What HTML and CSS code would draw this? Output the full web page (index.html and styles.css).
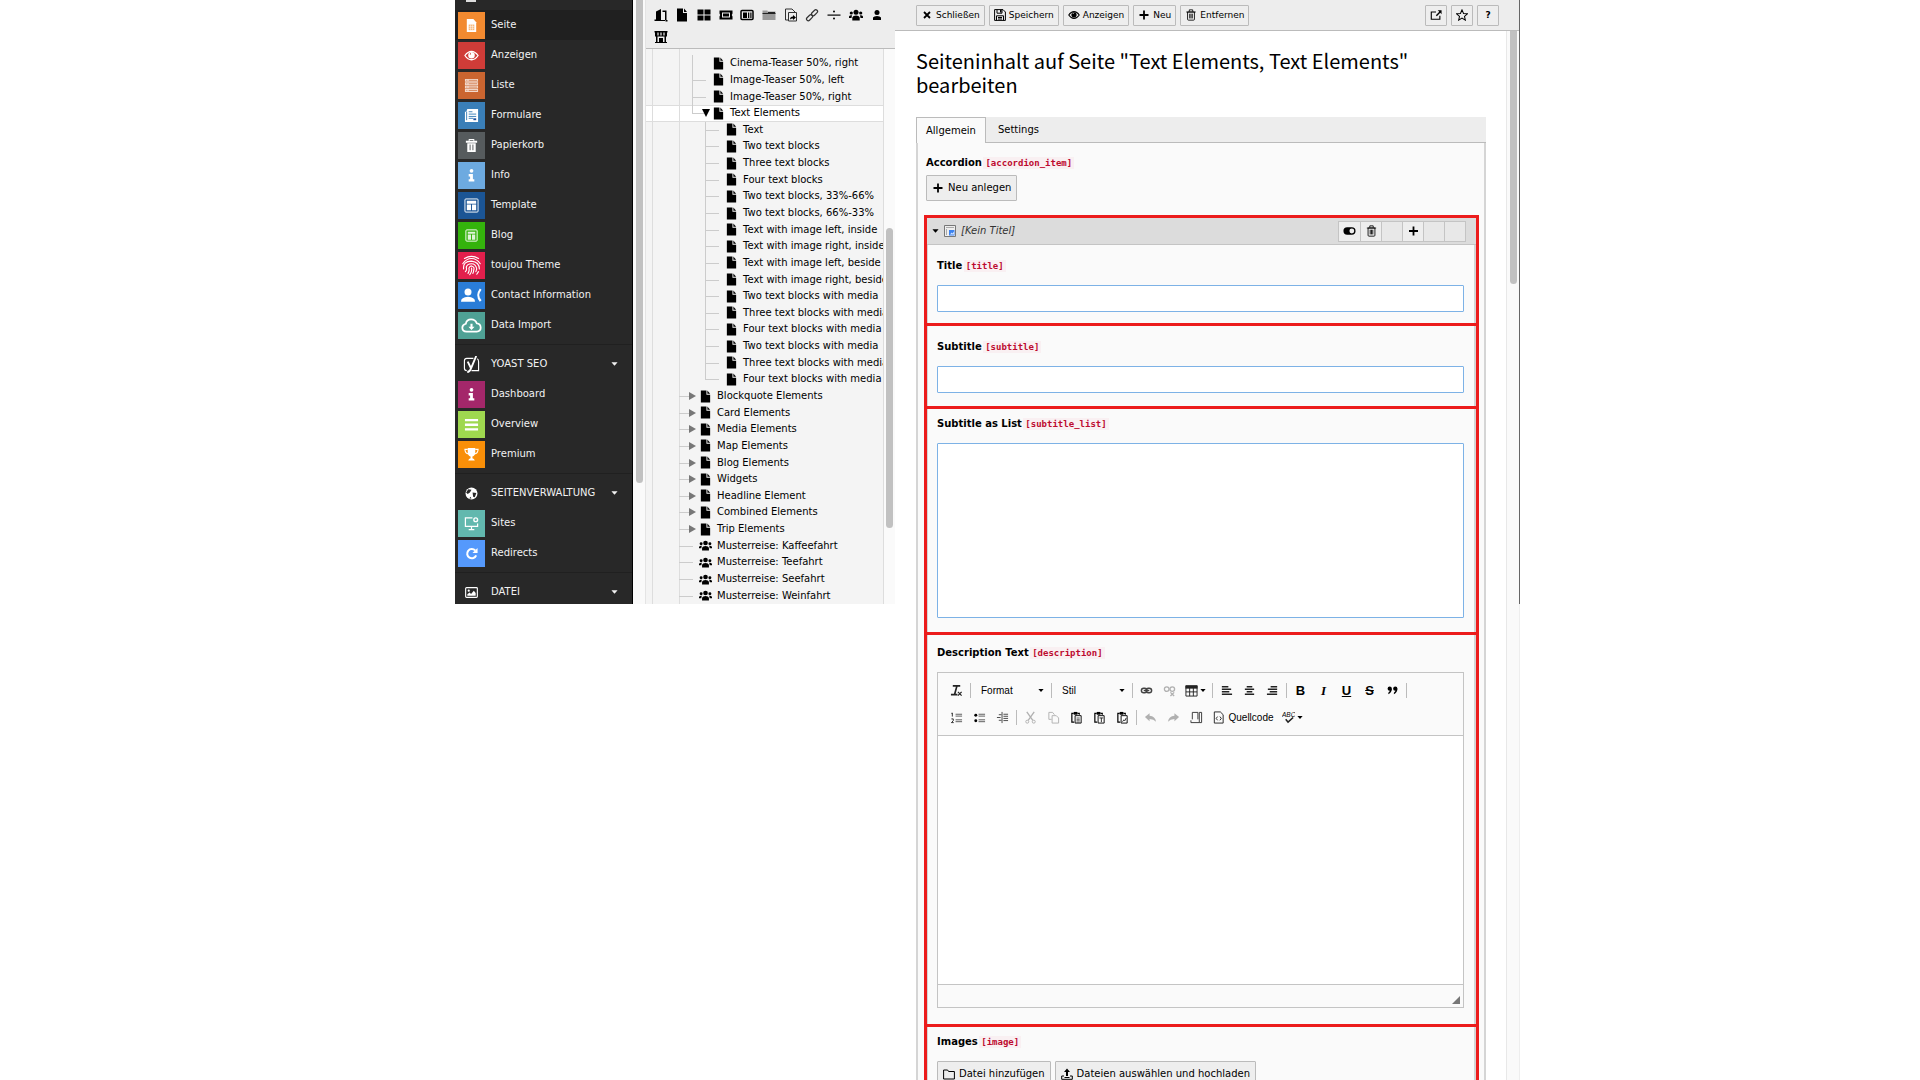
FILE: index.html
```html
<!DOCTYPE html>
<html lang="de">
<head>
<meta charset="utf-8">
<title>Seiteninhalt bearbeiten</title>
<link rel="stylesheet" href="styles.css">
</head>
<body>
<svg class="sprite" aria-hidden="true">
  <symbol id="page" viewBox="0 0 12 14"><path d="M1 .5h6v4.500h4V13.500H1z"/><path d="M8 .5l3 3.500H8z"/></symbol>
  <symbol id="users" viewBox="0 0 14 12"><circle cx="7" cy="3.300" r="2.500"/><circle cx="2.300" cy="4" r="1.600"/><circle cx="11.700" cy="4" r="1.600"/><path d="M3.300 11.500V8.500Q4 6.500 7 6.500t3.700 2v3zM0 9V7.500q.5-1.300 3-1.200L2.500 9zM14 9V7.500q-.5-1.300-3-1.200l.5 2.700z"/></symbol>
  <symbol id="plus" viewBox="0 0 12 12"><path d="M6 1.500v9M1.500 6h9" fill="none" stroke="currentColor" stroke-width="1.800"/></symbol>
  <symbol id="trash" viewBox="0 0 12 14"><path d="M2 3.500h8V12q0 1-1 1H3q-1 0-1-1zM.5 3.500h11M4 3V1h4v2M4.500 5.500v5.500M6 5.500v5.500M7.500 5.500v5.500" fill="none" stroke="currentColor"/></symbol>
  <symbol id="eye" viewBox="0 0 16 12"><path d="M1 6q3-4.500 7-4.500T15 6q-3 4.500-7 4.500T1 6z" fill="none" stroke="currentColor" stroke-width="1.400"/><path d="M8 2.200a3.500 3.500 0 1 0 3.500 3.500A3.500 3.500 0 0 0 8 2.200zM7.500 3.300v1.500H6q0-1.300 1.500-1.500z" fill-rule="evenodd"/></symbol>
  <symbol id="info" viewBox="0 0 12 16"><circle cx="6" cy="3" r="2"/><path d="M3 6.500h4.500v5.500H9v2.500H3V12h1.500V9H3z"/></symbol>
  <symbol id="caret" viewBox="0 0 8 4"><path d="M.5 0h7L4 4z"/></symbol>
  <symbol id="clip" viewBox="0 0 14 14"><path d="M4.500 12H2V2.500h2M8 2.500h2V4" fill="none" stroke="currentColor" stroke-width="1.300"/><path d="M4 1h4v3H4z"/><path d="M5.500 5h6.500v8H5.500z" fill="#fff" stroke="currentColor"/></symbol>
</svg>
<div class="page">
  <nav class="modules" aria-label="Module">
    <div class="cut-off"><span></span></div>
    <ul>
      <li class="active"><a href="#"><i class="tile orange"><svg viewBox="0 0 16 16"><path d="M3 1h7l3 3.500V15H3z"/><path d="M5 7h6v6H5z" fill="#f7b678"/><path d="M5 9h6M5 11h6M7 7v6M9 7v6" stroke="#fff" stroke-width=".5"/></svg></i>Seite</a></li>
      <li><a href="#"><i class="tile red"><svg viewBox="0 0 16 12"><use href="#eye"/></svg></i>Anzeigen</a></li>
      <li><a href="#"><i class="tile rust"><svg viewBox="0 0 16 16"><path d="M1 1h14v3H1zM1 4.600h14v3H1zM1 8.200h14v3H1zM1 11.800h14v3H1z" opacity=".75"/><path d="M2.500 2.500h1M2.500 6.100h1M2.500 9.700h1M2.500 13.300h1M5 2.500h9M5 6.100h9M5 9.700h9M5 13.300h9" stroke="#ca6530" stroke-width=".7"/></svg></i>Liste</a></li>
      <li><a href="#"><i class="tile blue"><svg viewBox="0 0 16 16"><path d="M3.500 1H15v14H1V4h1.500"/><path d="M5 4h4M5 6.500h8M5 9h8M5 11h5M2.800 4v9" stroke="#3a7fb8"/><path d="M10 11h3v2h-3z" fill="#1c4f9c"/></svg></i>Formulare</a></li>
      <li><a href="#"><i class="tile grey"><svg viewBox="0 0 16 16"><path d="M2 3h3V1h6v2h3v2H2zM3.500 5.500h9V15h-9zM6 3h4V2H6z" fill-rule="evenodd"/><path d="M6.500 7v6M9.500 7v6" stroke="#565b5d"/></svg></i>Papierkorb</a></li>
      <li><a href="#"><i class="tile sky"><svg viewBox="0 0 12 16"><use href="#info"/></svg></i>Info</a></li>
      <li><a href="#"><i class="tile navy"><svg viewBox="0 0 16 16"><rect x="1" y="1" width="14" height="14" rx="1" fill="none" stroke="#fff"/><path d="M3 3h10v3H3zM3 7h4.500v6H3zM8.500 7H13v6H8.500z"/></svg></i>Template</a></li>
      <li><a href="#"><i class="tile green"><svg viewBox="0 0 16 16"><rect x="2" y="2" width="12" height="12" rx="1" fill="none" stroke="#fff"/><path d="M4 4h8v2H4zM4 7h3.500v5.500H4zM8.500 7H12v5.500H8.500z" opacity=".85"/></svg></i>Blog</a></li>
      <li><a href="#"><i class="tile crimson"><svg class="big" viewBox="0 0 24 24"><path d="M4 4q8-5 16 0M2 10q4-6 10-6t10 6M3 16q-1-9 9-9 9 1 9 9M5 19q2-2 1-5 1-4 6-4t6 6l-1 3M8 21q2-3 1-6 1-2.500 3-2.500 4 1 2.500 5 0 2-1 3.500M12 15q1 4-2 7.500M20 19l-2 3" fill="none" stroke="#fff" stroke-width="1.300" stroke-linecap="round"/></svg></i>toujou Theme</a></li>
      <li><a href="#"><i class="tile azure"><svg class="big" viewBox="0 0 24 18"><circle cx="8" cy="5" r="4"/><path d="M0 16q0-5 8-5.500 8 .5 8 5.500z"/><path d="M23.500 2.500l-2 3q-1.500 3 0 6l2 3-2 1.500q-6-7 0-15z"/></svg></i>Contact Information</a></li>
      <li><a href="#"><i class="tile teal"><svg class="big" viewBox="0 0 24 18"><path d="M6.500 16q-5-.3-5-4.500 0-3.500 4-4.500 1-5 6-5 5 0 6.500 4.500 4.500.5 4.500 5 0 4-4.500 4.500z" fill="none" stroke="#fff" stroke-width="2"/><path d="M10.800 7h2.400v3.500h2.300L12 14l-3.500-3.500h2.300z"/></svg></i>Data Import</a></li>
    </ul>
    <ul>
      <li class="group"><button type="button"><i class="tile"><svg class="yoast" viewBox="0 0 18 18"><path d="M11 2.500H4Q1.500 2.500 1.500 5v8q0 2.500 2.500 2.500M9 15.500h7.500V6q0-2.500-1.500-3" fill="none" stroke="#fff" stroke-width="1.200"/><path d="M5 6l3.500 7M14 0L8.500 13q-1.200 4-4 4" fill="none" stroke="#fff" stroke-width="2"/></svg></i>YOAST SEO<svg class="caret"><use href="#caret"/></svg></button></li>
      <li><a href="#"><i class="tile plum"><svg viewBox="0 0 12 16"><use href="#info"/></svg></i>Dashboard</a></li>
      <li><a href="#"><i class="tile lime"><svg viewBox="0 0 16 16"><path d="M1 2h14v2.500H1zM1 7h14v2.500H1zM1 12h14v2.500H1z"/></svg></i>Overview</a></li>
      <li><a href="#"><i class="tile amber"><svg viewBox="0 0 16 16"><path d="M4 1h8v5q0 3-3 4v2q2 .3 2.500 2.500h-7Q5 12.300 7 12v-2Q4 9 4 6z"/><path d="M4 2.500H1Q1 7 5 7.500M12 2.500h3Q15 7 11 7.500" fill="none" stroke="#fff" stroke-width="1.200"/></svg></i>Premium</a></li>
    </ul>
    <ul>
      <li class="group"><button type="button"><i class="tile"><svg class="small" viewBox="0 0 12 12"><circle cx="6" cy="6" r="5.500"/><path d="M3 2l3 .5L4.500 5l-2 1.500L1 5zM7 5l3.500.5L9 9.500 7.500 9zM5 9l1 1.500H4z" fill="#282828"/></svg></i>SEITENVERWALTUNG<svg class="caret"><use href="#caret"/></svg></button></li>
      <li><a href="#"><i class="tile mint"><svg viewBox="0 0 16 16"><path d="M9 2H1.500v9h13V8M8 11v3M5 14.500h6" fill="none" stroke="#fff" stroke-width="1.300"/><circle cx="12.500" cy="4" r="2" fill="none" stroke="#fff" stroke-width="1.500"/></svg></i>Sites</a></li>
      <li><a href="#"><i class="tile cornflower"><svg class="small" viewBox="0 0 14 14"><path d="M11 3.800A5 5 0 1 0 12 9" fill="none" stroke="#fff" stroke-width="2.200"/><path d="M13.500 1v5.500H8z"/></svg></i>Redirects</a></li>
    </ul>
    <ul>
      <li class="group"><button type="button"><i class="tile"><svg class="small" viewBox="0 0 14 12"><rect x=".7" y=".7" width="12.600" height="10.600" rx="1" fill="none" stroke="#fff" stroke-width="1.200"/><circle cx="4" cy="4" r="1.200"/><path d="M2.500 9.500V8L5 6l1.500 1.500L9.500 4l2 2.500v3z"/></svg></i>DATEI<svg class="caret"><use href="#caret"/></svg></button></li>
    </ul>
  </nav>
  <div class="track track-modules"><span class="thumb"></span></div>

  <aside class="pagetree">
    <div class="tree-tools">
      <button type="button" aria-label="Backend"><svg viewBox="0 0 14 14"><path d="M.5 13v-1.500H2V3.500l5-2.500v11h4.500v1.500h2V12h-1V2.500H8.500V4H11v9H.5z"/></svg></button>
      <button type="button" aria-label="Standard"><svg viewBox="0 0 12 14"><use href="#page"/></svg></button>
      <button type="button" aria-label="Raster"><svg viewBox="0 0 14 14"><path d="M.5 1.500h6v5h-6zM7.500 1.500h6v5h-6zM.5 7.500h6v5h-6zM7.500 7.500h6v5h-6z"/></svg></button>
      <button type="button" aria-label="Ticket"><svg viewBox="0 0 14 14"><path d="M.5 2.500h13v3q-1.500 1.500 0 3v3H.5v-3q1.500-1.500 0-3zM3 4.500v5h8v-5z" fill-rule="evenodd"/><path d="M4 5.500h6v3H4z"/></svg></button>
      <button type="button" aria-label="News"><svg viewBox="0 0 14 14"><rect x="1" y="2.500" width="12" height="9" rx="1" fill="none" stroke="#000" stroke-width="1.500"/><path d="M3 4.500h4V10H3zM8 4.500h1.300V10H8zM10.300 4.500h1.200V10h-1.200z"/></svg></button>
      <button type="button" aria-label="Ordner"><svg viewBox="0 0 14 14"><path d="M.5 2.500h5v1h8v8.500H.5z" fill="#999"/><path d="M.5 5.500h13M6 4.500h7" stroke="#222"/></svg></button>
      <button type="button" aria-label="Verweis"><svg viewBox="0 0 14 14"><path d="M5 12H1.500V1H8l3 3v1M4.500 4.500h8V13h-8z" fill="none" stroke="#333"/><path d="M6 11.500q0-3 3-3V7l3 2.500-3 2.500v-1.500q-2 0-3 1z"/></svg></button>
      <button type="button" aria-label="Link"><svg viewBox="0 0 14 14"><g fill="none" stroke="#333" stroke-width="1.200"><rect x="1" y="8" width="7" height="3.500" rx="1.700" transform="rotate(-45 4.500 9.700)"/><rect x="6" y="3" width="7" height="3.500" rx="1.700" transform="rotate(-45 9.500 4.700)"/></g></svg></button>
      <button type="button" aria-label="Trenner"><svg viewBox="0 0 14 14"><path d="M.5 6.500h13v1.200H.5z"/><circle cx="7" cy="3.500" r="1"/><circle cx="7" cy="10.500" r="1"/></svg></button>
      <button type="button" aria-label="Gruppe"><svg viewBox="0 0 14 12"><use href="#users"/></svg></button>
      <button type="button" aria-label="Person"><svg viewBox="0 0 14 14"><circle cx="7" cy="4.500" r="2.500"/><path d="M3 12V9.500Q4 8 7 8t4 1.500V12z"/></svg></button>
      <button type="button" aria-label="Shop"><svg viewBox="0 0 14 14"><path d="M.5 1h13v1.500H.5zM1 2.500h12v4H1zM2 6.500h1.500V12H5V8h4v4h1.500V6.500H12V12h1v1H1v-1h1z"/><path d="M4 2.500v3M7 2.500v3M10 2.500v3" stroke="#ededed" stroke-width="1.200"/></svg></button>
    </div>
    <div class="tree-body">
      <ul class="tree">
        <li class="l2 first"><svg class="ic"><use href="#page"/></svg>Cinema-Teaser 50%, right</li>
        <li class="l2"><svg class="ic"><use href="#page"/></svg>Image-Teaser 50%, left</li>
        <li class="l2"><svg class="ic"><use href="#page"/></svg>Image-Teaser 50%, right</li>
        <li class="l2 last selected"><span class="open"></span><svg class="ic"><use href="#page"/></svg>Text Elements</li>
        <li class="l3"><svg class="ic"><use href="#page"/></svg>Text</li>
        <li class="l3"><svg class="ic"><use href="#page"/></svg>Two text blocks</li>
        <li class="l3"><svg class="ic"><use href="#page"/></svg>Three text blocks</li>
        <li class="l3"><svg class="ic"><use href="#page"/></svg>Four text blocks</li>
        <li class="l3"><svg class="ic"><use href="#page"/></svg>Two text blocks, 33%-66%</li>
        <li class="l3"><svg class="ic"><use href="#page"/></svg>Two text blocks, 66%-33%</li>
        <li class="l3"><svg class="ic"><use href="#page"/></svg>Text with image left, inside</li>
        <li class="l3"><svg class="ic"><use href="#page"/></svg>Text with image right, inside</li>
        <li class="l3"><svg class="ic"><use href="#page"/></svg>Text with image left, beside</li>
        <li class="l3"><svg class="ic"><use href="#page"/></svg>Text with image right, beside</li>
        <li class="l3"><svg class="ic"><use href="#page"/></svg>Two text blocks with media</li>
        <li class="l3"><svg class="ic"><use href="#page"/></svg>Three text blocks with media</li>
        <li class="l3"><svg class="ic"><use href="#page"/></svg>Four text blocks with media</li>
        <li class="l3"><svg class="ic"><use href="#page"/></svg>Two text blocks with media</li>
        <li class="l3"><svg class="ic"><use href="#page"/></svg>Three text blocks with media</li>
        <li class="l3 last"><svg class="ic"><use href="#page"/></svg>Four text blocks with media</li>
        <li class="l1"><span class="closed"></span><svg class="ic"><use href="#page"/></svg>Blockquote Elements</li>
        <li class="l1"><span class="closed"></span><svg class="ic"><use href="#page"/></svg>Card Elements</li>
        <li class="l1"><span class="closed"></span><svg class="ic"><use href="#page"/></svg>Media Elements</li>
        <li class="l1"><span class="closed"></span><svg class="ic"><use href="#page"/></svg>Map Elements</li>
        <li class="l1"><span class="closed"></span><svg class="ic"><use href="#page"/></svg>Blog Elements</li>
        <li class="l1"><span class="closed"></span><svg class="ic"><use href="#page"/></svg>Widgets</li>
        <li class="l1"><span class="closed"></span><svg class="ic"><use href="#page"/></svg>Headline Element</li>
        <li class="l1"><span class="closed"></span><svg class="ic"><use href="#page"/></svg>Combined Elements</li>
        <li class="l1"><span class="closed"></span><svg class="ic"><use href="#page"/></svg>Trip Elements</li>
        <li class="l1"><svg class="ic"><use href="#users"/></svg>Musterreise: Kaffeefahrt</li>
        <li class="l1"><svg class="ic"><use href="#users"/></svg>Musterreise: Teefahrt</li>
        <li class="l1"><svg class="ic"><use href="#users"/></svg>Musterreise: Seefahrt</li>
        <li class="l1"><svg class="ic"><use href="#users"/></svg>Musterreise: Weinfahrt</li>
      </ul>
      <div class="track track-tree"><span class="thumb"></span></div>
    </div>
  </aside>

  <main class="content">
    <header class="docheader">
      <button class="btn" type="button"><svg viewBox="0 0 12 12"><path d="M3 3l6 6M9 3L3 9" stroke="#000" stroke-width="1.800"/></svg>Schließen</button>
      <button class="btn" type="button"><svg viewBox="0 0 12 12"><path d="M.6.6h8.400l2.400 2.400v8.400H.6zM3 .6v3.600h5V.6M2.500 11.400V6.800h7v4.600M4 8.500h4M4 10h4" fill="none" stroke="#000"/><path d="M6 1h1.500v2.500H6z"/></svg>Speichern</button>
      <button class="btn" type="button"><svg viewBox="0 0 16 12"><use href="#eye"/></svg>Anzeigen</button>
      <button class="btn" type="button"><svg viewBox="0 0 12 12"><use href="#plus"/></svg>Neu</button>
      <button class="btn" type="button"><svg viewBox="0 0 12 14"><use href="#trash"/></svg>Entfernen</button>
      <span class="spacer"></span>
      <button class="btn square" type="button" aria-label="In neuem Fenster öffnen"><svg viewBox="0 0 14 12"><path d="M7 2.500H1.500v8.500h10V7" fill="none" stroke="#000" stroke-width="1.300"/><path d="M9 .5h4.500V5L12 3.500 8 7.500 6.800 6.300l4-4z"/></svg></button>
      <button class="btn square" type="button" aria-label="Lesezeichen"><svg viewBox="0 0 14 14"><path d="M7 1l1.800 4.200 4.500.4-3.400 3 1 4.400L7 10.700 3.100 13l1-4.400-3.400-3 4.500-.4z" fill="none" stroke="#000" stroke-width="1.200"/></svg></button>
      <button class="btn square help" type="button">?</button>
    </header>
    <div class="scroller">
      <form class="editform">
        <h1>Seiteninhalt auf Seite "Text Elements, Text Elements" bearbeiten</h1>
        <div class="tabs"><button class="tab current" type="button">Allgemein</button><button class="tab" type="button">Settings</button></div>
        <div class="panel">
          <div class="label accordion-label">Accordion <code>[accordion_item]</code></div>
          <button class="btn large" type="button"><svg viewBox="0 0 12 12"><use href="#plus"/></svg>Neu anlegen</button>
          <div class="record">
            <div class="record-head">
              <svg class="caret"><use href="#caret"/></svg>
              <svg class="record-icon" viewBox="0 0 12 12"><path d="M.5.5h11v11H.5z" fill="#eee" stroke="#777"/><path d="M2 2.500h8M2.500 4v6" stroke="#aaa"/><path d="M5 5h5.500v5.500H5z" fill="#3b82f0"/><path d="M6 9.500l1.500-2 1 1 1.500-2v3z" fill="#cfe2ff"/></svg>
              <em>[Kein Titel]</em>
              <span class="spacer"></span>
              <div class="actions">
                <button type="button" aria-label="Deaktivieren"><svg viewBox="0 0 14 10"><rect x=".5" y="1" width="13" height="8" rx="4"/><circle cx="9.500" cy="5" r="2.600" fill="#eee"/></svg></button>
                <button type="button" aria-label="Löschen"><svg viewBox="0 0 12 14"><use href="#trash"/></svg></button>
                <span></span>
                <button type="button" aria-label="Neu"><svg viewBox="0 0 12 12"><use href="#plus"/></svg></button>
                <span></span>
                <span></span>
              </div>
            </div>
            <section class="field f-title"><label class="label" for="title">Title <code>[title]</code></label><input id="title" type="text"></section>
            <section class="field f-subtitle"><label class="label" for="subtitle">Subtitle <code>[subtitle]</code></label><input id="subtitle" type="text"></section>
            <section class="field f-list"><label class="label" for="list">Subtitle as List <code>[subtitle_list]</code></label><textarea id="list"></textarea></section>
            <section class="field f-text"><label class="label" for="description">Description Text <code>[description]</code></label>
              <div class="editor">
                <div class="toolbar">
                  <div class="tools">
                    <button type="button" aria-label="Formatierung entfernen"><svg viewBox="0 0 14 14"><path d="M3 2h8M7.500 2L5 11M1 11.500h7" fill="none" stroke="#222" stroke-width="1.800"/><path d="M8.500 8.500l4 4M12.500 8.500l-4 4" stroke="#222" stroke-width="1.300"/></svg></button>
                    <hr>
                    <div class="combo"><select aria-label="Format"><option>Format</option></select><svg class="caret"><use href="#caret"/></svg></div>
                    <hr>
                    <div class="combo"><select aria-label="Stil"><option>Stil</option></select><svg class="caret"><use href="#caret"/></svg></div>
                    <hr>
                    <button type="button" aria-label="Link"><svg viewBox="0 0 14 14"><g fill="none" stroke="#444" stroke-width="1.600"><rect x="1.500" y="4.500" width="6" height="5" rx="2.500"/><rect x="6.500" y="4.500" width="6" height="5" rx="2.500"/><path d="M4 7h6"/></g></svg></button>
                    <button class="off" type="button" aria-label="Link entfernen"><svg viewBox="0 0 14 14"><g fill="none" stroke="#444" stroke-width="1.400"><rect x="1.500" y="3" width="5" height="5" rx="2.500"/><rect x="7.500" y="3" width="5" height="5" rx="2.500"/><path d="M8 9l4 4M12 9l-4 4"/></g></svg></button>
                    <button class="menu" type="button" aria-label="Tabelle"><svg viewBox="0 0 14 14"><path d="M1 2h12v11H1zM1 8.500h12M5 4v9M9 4v9" fill="none" stroke="#222"/><path d="M.5 1.500h13v3.500H.5z" fill="#222"/></svg><svg class="caret"><use href="#caret"/></svg></button>
                    <hr>
                    <button type="button" aria-label="Linksbündig"><svg viewBox="0 0 14 14"><path d="M2 3h7M2 5.700h10M2 8.400h8M2 11h11" stroke="#222" stroke-width="1.700"/></svg></button>
                    <button type="button" aria-label="Zentriert"><svg viewBox="0 0 14 14"><path d="M4 3h6M2 5.700h10M4 8.400h6M2 11h10" stroke="#222" stroke-width="1.700"/></svg></button>
                    <button type="button" aria-label="Rechtsbündig"><svg viewBox="0 0 14 14"><path d="M5 3h7M2 5.700h10M4 8.400h8M1 11h11" stroke="#222" stroke-width="1.700"/></svg></button>
                    <hr>
                    <button class="glyph" type="button"><b>B</b></button>
                    <button class="glyph serif" type="button"><i>I</i></button>
                    <button class="glyph" type="button"><u>U</u></button>
                    <button class="glyph" type="button"><s>S</s></button>
                    <button type="button" aria-label="Zitat"><svg viewBox="0 0 14 14"><circle cx="4" cy="5" r="2.300"/><circle cx="10" cy="5" r="2.300"/><path d="M6.300 5q0 4-3.800 6V9.500Q4.500 8 4.300 6zM12.300 5q0 4-3.800 6V9.500q2-1.500 1.800-3.500z"/></svg></button>
                    <hr>
                  </div>
                  <div class="tools">
                    <button type="button" aria-label="Nummerierte Liste"><svg viewBox="0 0 14 14"><path d="M2.500 2v4M1.500 2.500h1M1.500 8.500h2v2l-2 2h2.500" fill="none" stroke="#222"/><path d="M6 3.500h7M6 5.500h7M6 9.500h7M6 11.500h7" stroke="#555"/></svg></button>
                    <button type="button" aria-label="Liste"><svg viewBox="0 0 14 14"><circle cx="3" cy="4.500" r="1.600"/><circle cx="3" cy="10.500" r="1.600"/><path d="M6 3.500h7M6 5.500h7M6 9.500h7M6 11.500h7" stroke="#555"/></svg></button>
                    <button type="button" aria-label="Einzug"><svg viewBox="0 0 14 14"><path d="M6.500 1v12M1 7h4M8 3.500h5M3 4h3M8 5.700h5M8 8h5M8 10.300h5M3 10h3" stroke="#444"/></svg></button>
                    <hr>
                    <button class="off" type="button" aria-label="Ausschneiden"><svg viewBox="0 0 14 14"><path d="M3 1l6.500 9M11 1L4.500 10" fill="none" stroke="#444" stroke-width="1.400"/><circle cx="3.500" cy="11.500" r="1.600" fill="none" stroke="#444"/><circle cx="10.500" cy="11.500" r="1.600" fill="none" stroke="#444"/></svg></button>
                    <button class="off" type="button" aria-label="Kopieren"><svg viewBox="0 0 14 14"><path d="M5 9H2V1.500h4L8 4M5.500 5H10l2.500 2.500V13h-7z" fill="none" stroke="#444"/></svg></button>
                    <button type="button" aria-label="Einfügen"><svg viewBox="0 0 14 14"><use href="#clip"/><path d="M7 7.500h3.500M7 9h3.500M7 10.500h3.500M7 12h3.500" stroke="#333" stroke-width=".8"/></svg></button>
                    <button type="button" aria-label="Als Text einfügen"><svg viewBox="0 0 14 14"><use href="#clip"/><path d="M7 7.500h4M9 7.500V12" stroke="#222"/></svg></button>
                    <button type="button" aria-label="Aus Word einfügen"><svg viewBox="0 0 14 14"><use href="#clip"/><path d="M7 11.500l1.500-2 1 1 1.500-3" fill="none" stroke="#222"/></svg></button>
                    <hr>
                    <button class="off" type="button" aria-label="Rückgängig"><svg viewBox="0 0 14 14"><path d="M1 6.500L6 2.500V5q6 .5 7 6.500-2.500-3-7-3v2.500z" fill="#444"/></svg></button>
                    <button class="off" type="button" aria-label="Wiederholen"><svg viewBox="0 0 14 14"><path d="M13 6.500L8 2.500V5q-6 .5-7 6.500 2.500-3 7-3v2.500z" fill="#444"/></svg></button>
                    <button type="button" aria-label="Trennung"><svg viewBox="0 0 14 14"><path d="M2.500 9V1.500h6V9M1 10v2.500h9M10 1.500h2.500v11H10z" fill="none" stroke="#333"/></svg></button>
                    <button class="source" type="button"><svg viewBox="0 0 14 14"><path d="M2.500 1H9l3 3v9H2.500zM6 6L4.500 8 6 10M8.500 6L10 8l-1.500 2" fill="none" stroke="#222"/></svg>Quellcode</button>
                    <button class="menu" type="button" aria-label="Rechtschreibung"><svg viewBox="0 0 14 14"><text x="0" y="6" font-size="7" font-family="Liberation Sans, sans-serif" font-style="italic">ABC</text><path d="M4 9l2.500 3L12 7" fill="none" stroke="#222" stroke-width="1.700"/></svg><svg class="caret"><use href="#caret"/></svg></button>
                  </div>
                </div>
                <textarea class="editor-body" id="description"></textarea>
                <div class="editor-foot"></div>
              </div>
            </section>
            <section class="field f-images"><div class="label">Images <code>[image]</code></div>
              <div class="buttons">
                <button class="btn large" type="button"><svg viewBox="0 0 12 12"><path d="M.6 2h4l1 1.500h5.800V11H.6z" fill="none" stroke="#000"/></svg>Datei hinzufügen</button>
                <button class="btn large" type="button"><svg viewBox="0 0 12 12"><path d="M3 8H.7v3.300h10.600V8H9M3.500 9.500h5" fill="none" stroke="#000"/><path d="M6 .5L9 4H7v4H5V4H3z"/></svg>Dateien auswählen und hochladen</button>
              </div>
            </section>
          </div>
        </div>
      </form>
      <div class="track track-main"><span class="thumb"></span></div>
    </div>
  </main>
</div>
</body>
</html>
```
FILE: styles.css
```css
* { box-sizing: border-box; }

body {
  margin: 0;
  height: 100vh;
  overflow: hidden;
  background: #fff;
  color: #000;
  font: 10px/16px "DejaVu Sans", sans-serif;
}

.sprite { display: none; }
ul { margin: 0; padding: 0; list-style: none; }
button, select { margin: 0; color: inherit; font: inherit; cursor: pointer; }
.spacer { flex: 1; }
.caret { width: 7px; height: 4px; flex: none; fill: currentColor; }

.page {
  display: grid;
  grid-template-columns: 178px 13px 249px minmax(0, 1fr);
  align-items: start;
  height: 100%;
  padding: 0 400px 0 455px;
}

/* Module menu */
.modules, .track-modules, .pagetree { height: 604px; overflow: hidden; }
.modules { background: #282828; color: #f2f2f2; border-right: 1px solid #000; }
.cut-off { height: 10px; padding-left: 11px; }
.cut-off span { display: block; width: 10px; height: 2px; background: #ddd; }
.modules ul + ul { margin-top: 4px; padding-top: 4px; border-top: 1px solid #202020; }
.modules a, .modules button {
  display: flex;
  align-items: center;
  gap: 6px;
  width: 100%;
  height: 30px;
  padding: 0 14px 0 3px;
  border: 0;
  background: none;
  color: inherit;
  text-align: left;
  text-decoration: none;
}
.modules .active { background: #202020; }
.modules .caret { margin-left: auto; }
.tile { display: grid; place-items: center; width: 27px; height: 27px; flex: none; }
.tile svg { width: 15px; height: 15px; fill: #fff; color: #fff; }
.tile svg.big { width: 21px; height: 21px; }
.tile svg.yoast { width: 17px; height: 17px; }
.tile svg.small { width: 13px; height: 13px; }
.orange { background: #f28a30; }
.red { background: #d03c38; }
.rust { background: #ca6530; }
.blue { background: #3a7fb8; }
.grey { background: #565b5d; }
.sky { background: #6daae0; }
.navy { background: #1b5595; }
.green { background: #34b30c; }
.crimson { background: #e21f4c; }
.azure { background: #2a7dd8; }
.teal { background: #4fa195; }
.plum { background: #a4276a; }
.lime { background: #9fd84f; }
.amber { background: #f98f08; }
.mint { background: #62b8ae; }
.cornflower { background: #5599fc; }

/* Scroll tracks */
.track { background: #fafafa; }
.thumb { display: block; width: 7px; margin: 0 auto; background: #c1c1c1; border-radius: 0 0 4px 4px; }
.track-modules { border-right: 1px solid #e4e4e4; }
.track-modules .thumb { height: 483px; }

/* Page tree */
.pagetree { display: flex; flex-direction: column; }
.tree-tools {
  display: grid;
  grid-template-columns: repeat(11, 1fr);
  grid-auto-rows: 22px;
  height: 49px;
  padding: 4px 7px 0 4px;
  background: #ededed;
  border-bottom: 1px solid #bbb;
}
.tree-tools button { display: grid; place-items: center; padding: 0; border: 0; background: none; }
.tree-tools svg { width: 14px; height: 14px; }
.tree-body { display: grid; grid-template-columns: minmax(0, 1fr) 11px; flex: 1; }
.tree {
  display: grid;
  grid-auto-rows: 1fr;
  padding-top: 6px;
  overflow: hidden;
  background: linear-gradient(#ddd, #ddd) 6px 0 / 1px 100% no-repeat, linear-gradient(#ddd, #ddd) 33px 0 / 1px 100% no-repeat, #f4f4f4;
  border-right: 1px solid #ddd;
}
.tree li {
  position: relative;
  display: flex;
  align-items: center;
  gap: 5px;
  white-space: nowrap;
}
.tree .ic { width: 13px; height: 13px; flex: none; }
.l1 { padding-left: 53px; }
.l2 { padding-left: 66px; }
.l3 { padding-left: 79px; }
.selected {
  background: linear-gradient(#ddd, #ddd) 6px 0 / 1px 100% no-repeat, linear-gradient(#ddd, #ddd) 33px 0 / 1px 100% no-repeat, #fff;
  box-shadow: inset 0 1px #ddd, inset 0 -1px #ddd;
}
.tree li::before { content: ""; position: absolute; top: 0; height: 100%; border-left: 1px solid #ccc; }
.tree .l1::before { display: none; }
.tree .l2::before { left: 46px; }
.tree .l3::before { left: 59px; }
.tree .last::before { height: 50%; }
.tree li::after { content: ""; position: absolute; top: 50%; width: 14px; border-top: 1px solid #ccc; }
.tree .first::after { display: none; }
.tree .l1::after { left: 33px; }
.tree .l2::after { left: 46px; }
.tree .l3::after { left: 59px; }
.open, .closed { position: absolute; z-index: 1; border: 4px solid transparent; }
.open { left: 56px; border-top: 8px solid #000; border-bottom: 0; }
.closed { left: 43px; border-left: 7px solid #777; border-right: 0; }
.track-tree { padding-top: 179px; }
.track-tree .thumb { height: 300px; border-radius: 4px; }

/* Document */
.content { position: relative; display: flex; flex-direction: column; height: 100%; min-width: 0; }
.content::after { content: ""; position: absolute; top: 0; right: 0; width: 1px; height: 604px; background: #666; }
.docheader {
  display: flex;
  align-items: center;
  gap: 4px;
  flex: none;
  height: 31px;
  padding: 0 21px;
  background: #ededed;
  border-bottom: 1px solid #bbb;
}
.btn {
  display: inline-flex;
  align-items: center;
  gap: 3px;
  height: 21px;
  padding: 0 4px;
  background: #eee;
  border: 1px solid #bbb;
  border-radius: 1px;
  font-size: 9px;
  white-space: nowrap;
}
.btn svg { width: 12px; height: 12px; flex: none; }
.btn.square { justify-content: center; width: 22px; padding: 0; }
.btn.help { font-weight: bold; }
.btn.large { height: 26px; padding: 0 5px; gap: 4px; font-size: 10px; }

.scroller { display: grid; grid-template-columns: minmax(0, 1fr) 14px; flex: 1; min-height: 0; overflow: hidden; }
.editform { padding: 18px 20px 0 21px; }
.track-main { border-left: 1px solid #e8e8e8; border-right: 1px solid #eee; }
.track-main .thumb { height: 253px; }
h1 { margin: 0 0 20px; font: 400 20px/24px "Noto Sans CJK SC", sans-serif; }

.tabs { display: flex; height: 26px; background: #ededed; border-bottom: 1px solid #bbb; }
.tab { height: 26px; padding: 0 12px; border: 0; background: none; }
.tab.current { padding: 0 9px; background: #fafafa; border: 1px solid #bbb; border-bottom: 0; }
.panel { min-height: 1000px; padding: 12px 5px 0 6px; background: #fafafa; border: solid #d5d5d5; border-width: 0 2px; }
.panel > .btn, .accordion-label { margin-left: 2px; }
.label { display: block; margin-bottom: 11px; font-weight: bold; }
.accordion-label { margin-bottom: 4px; }
code { margin-left: -2px; padding: 1px 2px; background: #f9f0f2; color: #bd0a2f; font: bold 9px "DejaVu Sans Mono", monospace; }

.record { margin-top: 14px; border: 3px solid #ec1c1c; }
.record-head { display: flex; align-items: center; gap: 5px; height: 27px; padding: 0 10px 0 5px; background: #dcdcdc; border-bottom: 1px solid #c4c4c4; }
.record-head em { color: #333; }
.record-icon { width: 12px; height: 12px; }
.actions { display: flex; height: 21px; border: 1px solid #c4c4c4; }
.actions > * { display: grid; place-items: center; width: 21px; padding: 0; border: 0; background: #e8e8e8; }
.actions > button { background: #eee; }
.actions > * + * { border-left: 1px solid #c4c4c4; }
.actions svg { width: 13px; height: 12px; }

.field { padding: 7px 12px 14px 10px; box-shadow: inset 1px 0 #d5d5d5, inset -2px 0 #d5d5d5; }
.field + .field { border-top: 3px solid #ec1c1c; }
.f-title { padding-top: 13px; padding-bottom: 11px; }
.f-subtitle { padding-top: 13px; padding-bottom: 13px; }
.f-text { padding-top: 10px; padding-bottom: 16px; }
input, textarea { display: block; width: 100%; height: 27px; padding: 4px; background: #fff; border: 1px solid #7db2e6; border-radius: 1px; font: inherit; resize: none; }
textarea { height: 175px; }
.buttons { display: flex; gap: 4px; }

.editor { border: 1px solid #c4c4c4; }
.toolbar { padding: 4px 7px; background: #fafafa; border-bottom: 1px solid #c4c4c4; font-family: "Liberation Sans", sans-serif; }
.tools { display: flex; align-items: center; height: 27px; }
.tools hr { flex: none; width: 1px; height: 15px; margin: 0 2px; border: 0; background: #bbb; }
.tools button { display: flex; align-items: center; justify-content: center; width: 23px; height: 23px; padding: 0; border: 0; background: none; flex: none; }
.tools button svg:not(.caret) { width: 13px; height: 13px; flex: none; }
.tools .off { opacity: .4; }
.tools .menu { width: 29px; gap: 2px; }
.tools .source { width: 70px; gap: 3px; }
.tools .glyph { font-size: 13px; font-weight: bold; }
.tools .serif { font-family: "Liberation Serif", serif; }
.tools .caret { width: 6px; height: 3px; }
.combo { display: flex; align-items: center; width: 76px; padding: 0 5px 0 8px; }
.combo select { flex: 1; min-width: 0; padding: 0; border: 0; background: none; appearance: none; }
.editor .editor-body { height: 248px; border: 0; }
.editor-foot { display: flex; align-items: flex-end; justify-content: flex-end; height: 23px; padding: 3px; background: #fafafa; border-top: 1px solid #c4c4c4; }
.editor-foot::after { content: ""; border-left: 8px solid transparent; border-bottom: 8px solid #777; }

@media (max-width: 1400px) {
  .page { padding: 0; }
}
```
